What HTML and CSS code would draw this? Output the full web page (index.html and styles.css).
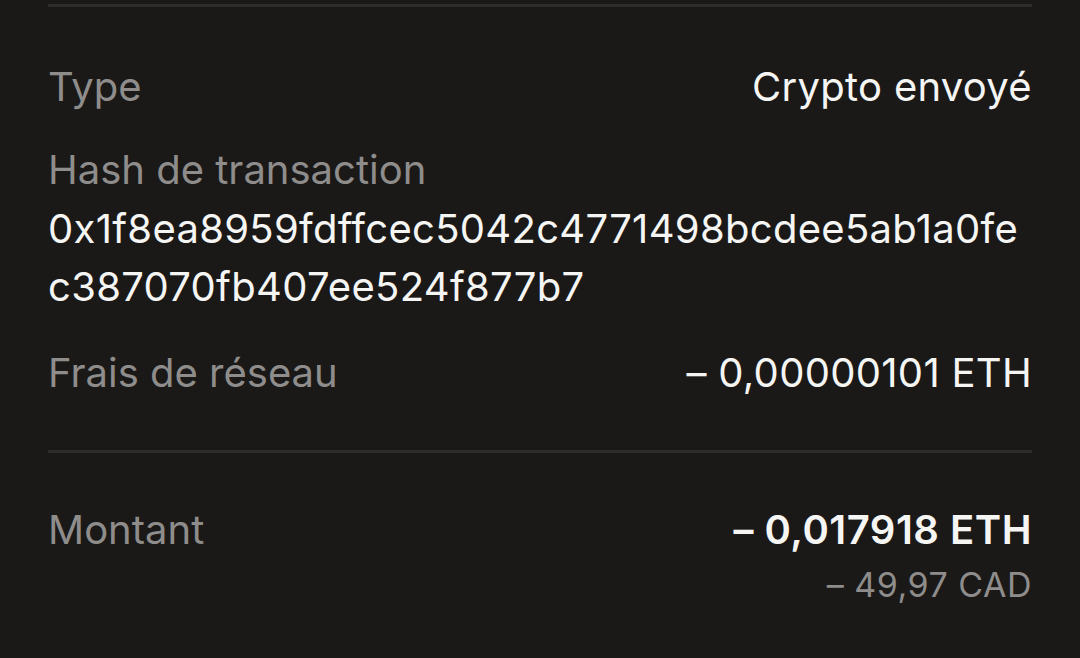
FILE: index.html
```html
<!DOCTYPE html>
<html lang="fr">
<head>
  <meta charset="UTF-8" />
  <meta name="viewport" content="width=device-width, initial-scale=1.0"/>
  <title>Détails de la transaction</title>
  <link rel="stylesheet" href="styles.css">
</head>
<body>

<div class="details">
  <div class="divider top"></div>

  <!-- Transaction info -->
  <div class="row first">
    <span class="label">Type</span>
    <span class="value">Crypto envoyé</span>
  </div>

  <div class="block">
    <div class="label">Hash de transaction</div>
    <div class="hash">0x1f8ea8959fdffcec5042c4771498bcdee5ab1a0fec387070fb407ee524f877b7</div>
  </div>

  <div class="row fee">
    <span class="label">Frais de réseau</span>
    <span class="value">– 0,00000101 ETH</span>
  </div>

  <div class="divider"></div>

  <!-- Total -->
  <div class="row total">
    <span class="label">Montant</span>
    <div class="amount">
      <div class="value strong">– 0,017918 ETH</div>
      <div class="fiat">– 49,97 CAD</div>
    </div>
  </div>
</div>

</body>
</html>
```

FILE: styles.css
```css
body {
  margin: 0;
  background: #1a1918;
  font-family: Inter, "Noto Sans", sans-serif;
  color: #f5f5f4;
}
.details {
  padding: 0 48px;
  font-size: 40px;
  line-height: 58px;
}
.divider {
  height: 3px;
  background: #2d2c2b;
}
.divider.top {
  margin-top: 4px;
}
.row {
  display: flex;
  justify-content: space-between;
  align-items: flex-start;
}
.row.first {
  margin-top: 51px;
}
.block {
  margin-top: 25px;
}
.hash {
  word-break: break-all;
  letter-spacing: 0.3px;
  margin-top: 1px;
}
.row.fee {
  margin-top: 28px;
  margin-bottom: 48px;
}
.row.total {
  margin-top: 48px;
}
.label {
  color: #8e8d8b;
}
.value {
  letter-spacing: 0.3px;
}
.amount {
  text-align: right;
}
.strong {
  font-weight: 600;
  letter-spacing: 0.5px;
}
.fiat {
  color: #8e8d8b;
  font-size: 34px;
  line-height: 52px;
  letter-spacing: 0.5px;
}
```
